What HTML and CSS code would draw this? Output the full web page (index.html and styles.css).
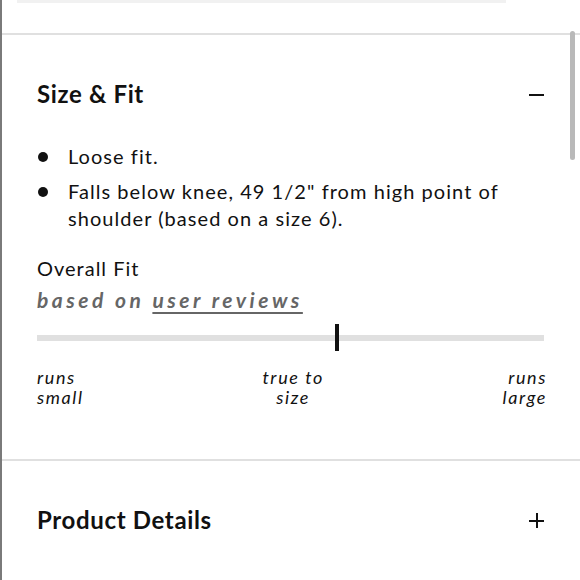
FILE: index.html
```html
<!DOCTYPE html>
<html>
<head>
<meta charset="utf-8">
<link rel="stylesheet" href="styles.css">
</head>
<body>
<div class="page">
  <div class="topbar"></div>
  <section class="acc first">
    <div class="acc-head">
      <h2 class="acc-title">Size &amp; Fit</h2>
      <span class="icon minus"></span>
    </div>
    <ul class="bullets">
      <li>Loose fit.</li>
      <li>Falls below knee, 49 1/2" from high point of shoulder (based on a size 6).</li>
    </ul>
    <div class="fit-title">Overall Fit</div>
    <div class="fit-sub">based on <span class="link">user reviews</span></div>
    <div class="scale">
      <div class="track"></div>
      <div class="marker"></div>
    </div>
    <div class="labels">
      <span class="lab left">runs<br>small</span>
      <span class="lab mid">true to<br>size</span>
      <span class="lab right">runs<br>large</span>
    </div>
  </section>
  <section class="acc">
    <div class="acc-head">
      <h2 class="acc-title">Product Details</h2>
      <span class="icon plus"></span>
    </div>
  </section>
  <div class="scrollbar"></div>
</div>
</body>
</html>
```
FILE: styles.css
```css
html, body {
  margin: 0;
  padding: 0;
  background: #fff;
}
body {
  font-family: "Lato", "Noto Sans", sans-serif;
  color: #111;
}
.page {
  position: relative;
  height: 580px;
  overflow: hidden;
  border-left: 2px solid #7a7a7a;
  box-sizing: border-box;
}
.topbar {
  height: 3px;
  margin: 0 74px 0 15px;
  background: #f1f1f1;
}
.acc {
  border-top: 2px solid #e0e0e0;
  padding: 44px 36px 0 35px;
}
.acc.first {
  margin-top: 30px;
  height: 426px;
  box-sizing: border-box;
}
.acc-head {
  display: flex;
  justify-content: space-between;
  align-items: center;
}
.acc-title {
  margin: 0;
  font-size: 24px;
  line-height: 30px;
  font-weight: 700;
  letter-spacing: 0.65px;
}
.icon {
  position: relative;
  width: 15px;
  height: 15px;
}
.icon::before, .icon::after {
  content: "";
  position: absolute;
  background: #111;
}
.minus::before {
  left: 0; right: 0; top: 7px; height: 2px;
}
.plus::before {
  left: 0; right: 0; top: 7px; height: 2px;
}
.plus::after {
  top: 0; bottom: 0; left: 7px; width: 2px;
}
.bullets {
  list-style: none;
  margin: 34px 0 0 0;
  padding: 0;
}
.bullets li {
  position: relative;
  padding-left: 31px;
  font-size: 20px;
  line-height: 27px;
  margin-bottom: 8px;
  letter-spacing: 1.05px;
}
.bullets li::before {
  content: "";
  position: absolute;
  left: 1px;
  top: 9px;
  width: 10px;
  height: 10px;
  border-radius: 50%;
  background: #111;
}
.fit-title {
  margin-top: 23px;
  font-size: 20px;
  line-height: 27px;
  letter-spacing: 1px;
}
.fit-sub {
  margin-top: 4px;
  font-size: 21px;
  line-height: 27px;
  font-weight: 700;
  font-style: italic;
  color: #666;
  letter-spacing: 3.5px;
}
.fit-sub .link {
  text-decoration: underline;
  text-underline-offset: 4px;
  text-decoration-thickness: 2px;
}
.scale {
  position: relative;
  margin-top: 11px;
  padding-top: 11px;
  height: 28px;
  box-sizing: border-box;
}
.track {
  height: 6px;
  background: #e0e0e0;
}
.marker {
  position: absolute;
  left: 298px;
  top: 0;
  width: 4px;
  height: 27px;
  background: #111;
}
.labels {
  display: flex;
  justify-content: space-between;
  margin-top: 15px;
  margin-right: -3px;
  font-size: 18px;
  line-height: 20px;
  font-style: italic;
  letter-spacing: 1.6px;
}
.lab { text-align: center; }
.lab.left { text-align: left; }
.lab.right { text-align: right; }
.scrollbar {
  position: absolute;
  right: 5px;
  top: 31px;
  width: 5px;
  height: 129px;
  border-radius: 3px;
  background: #b9b9b9;
}
```
